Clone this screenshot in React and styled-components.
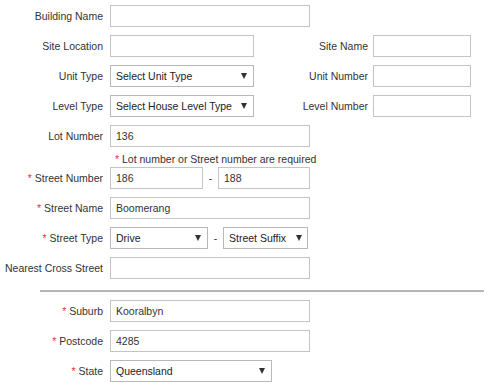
import React from "react";
import styled, { createGlobalStyle } from "styled-components";

const GlobalStyle = createGlobalStyle`
  body {
    margin: 0;
    background: #fff;
    font-family: "Liberation Sans", Arial, sans-serif;
    color: #333;
  }
`;

function App() {
  return (
    <>
      <GlobalStyle />
      <FormStyled>
        <Row>
          <Label>Building Name</Label>
          <Input w={200} />
        </Row>
        <Row>
          <Label>Site Location</Label>
          <Input w={144} />
          <SideLabel>Site Name</SideLabel>
          <Input w={98} />
        </Row>
        <Row>
          <Label>Unit Type</Label>
          <Select w={144}>
            <SelectText>Select Unit Type</SelectText>
            <Arrow />
          </Select>
          <SideLabel>Unit Number</SideLabel>
          <Input w={98} />
        </Row>
        <Row>
          <Label>Level Type</Label>
          <Select w={144}>
            <SelectText>Select House Level Type</SelectText>
            <Arrow />
          </Select>
          <SideLabel>Level Number</SideLabel>
          <Input w={98} />
        </Row>
        <Row>
          <Label>Lot Number</Label>
          <Input w={200}>136</Input>
        </Row>
        <Hint>
          <Star>*</Star> Lot number or Street number are required
        </Hint>
        <Row>
          <Label>
            <Star>*</Star> Street Number
          </Label>
          <Input w={93}>186</Input>
          <Dash>-</Dash>
          <Input w={92}>188</Input>
        </Row>
        <Row>
          <Label>
            <Star>*</Star> Street Name
          </Label>
          <Input w={200}>Boomerang</Input>
        </Row>
        <Row>
          <Label>
            <Star>*</Star> Street Type
          </Label>
          <Select w={98}>
            <SelectText>Drive</SelectText>
            <Arrow />
          </Select>
          <Dash>-</Dash>
          <Select w={85} pad={5}>
            <SelectText>Street Suffix</SelectText>
            <Arrow />
          </Select>
        </Row>
        <Row>
          <Label>Nearest Cross Street</Label>
          <Input w={200} />
        </Row>
        <Divider />
        <Row>
          <Label>
            <Star>*</Star> Suburb
          </Label>
          <Input w={200}>Kooralbyn</Input>
        </Row>
        <Row>
          <Label>
            <Star>*</Star> Postcode
          </Label>
          <Input w={200}>4285</Input>
        </Row>
        <Row>
          <Label>
            <Star>*</Star> State
          </Label>
          <Select w={162}>
            <SelectText>Queensland</SelectText>
            <Arrow />
          </Select>
        </Row>
      </FormStyled>
    </>
  );
}

const FormStyled = styled.div`
  padding-top: 5px;
  display: flex;
  flex-direction: column;
  font-size: 10.5px;
`;

const Row = styled.div`
  display: flex;
  align-items: center;
  height: 22px;
  margin-bottom: 8px;
`;

const Label = styled.div`
  width: 110px;
  flex-shrink: 0;
  padding-right: 7px;
  box-sizing: border-box;
  text-align: right;
  white-space: nowrap;
  color: #333;
`;

const SideLabel = styled.div`
  width: 119px;
  padding-right: 5px;
  box-sizing: border-box;
  text-align: right;
  white-space: nowrap;
`;

const Input = styled.div`
  width: ${(p) => p.w}px;
  height: 22px;
  flex-shrink: 0;
  box-sizing: border-box;
  border: 1px solid #c4c4c4;
  padding: 0 5px;
  display: flex;
  align-items: center;
  color: #333;
`;

const Select = styled.div`
  width: ${(p) => p.w}px;
  height: 22px;
  flex-shrink: 0;
  box-sizing: border-box;
  border: 1px solid #b8b8b8;
  padding: 0 ${(p) => p.pad ?? 6}px 0 5px;
  display: flex;
  align-items: center;
  color: #222;
  overflow: hidden;
`;

const SelectText = styled.span`
  flex: 1;
  white-space: nowrap;
  overflow: hidden;
`;

const Arrow = styled.span`
  flex-shrink: 0;
  width: 0;
  height: 0;
  margin-left: 3px;
  border-left: 3.5px solid transparent;
  border-right: 3.5px solid transparent;
  border-top: 6px solid #333;
`;

const Dash = styled.span`
  width: 15px;
  flex-shrink: 0;
  text-align: center;
  color: #333;
`;

const Star = styled.span`
  color: #e53333;
`;

const Hint = styled.div`
  margin: -2px 0 2px 115px;
  height: 12px;
  line-height: 12px;
  white-space: nowrap;
`;

const Divider = styled.div`
  margin: 3px 5px 8px 40px;
  height: 2px;
  background: #b5b5b5;
`;

export default App;
